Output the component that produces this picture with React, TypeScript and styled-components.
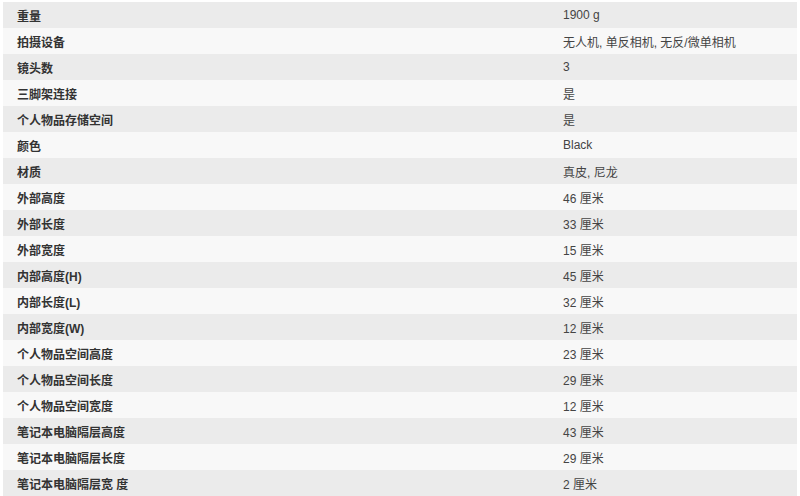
import React from "react";
import styled, { createGlobalStyle } from "styled-components";

const specs: [string, string][] = [
  ["重量", "1900 g"],
  ["拍摄设备", "无人机, 单反相机, 无反/微单相机"],
  ["镜头数", "3"],
  ["三脚架连接", "是"],
  ["个人物品存储空间", "是"],
  ["颜色", "Black"],
  ["材质", "真皮, 尼龙"],
  ["外部高度", "46 厘米"],
  ["外部长度", "33 厘米"],
  ["外部宽度", "15 厘米"],
  ["内部高度(H)", "45 厘米"],
  ["内部长度(L)", "32 厘米"],
  ["内部宽度(W)", "12 厘米"],
  ["个人物品空间高度", "23 厘米"],
  ["个人物品空间长度", "29 厘米"],
  ["个人物品空间宽度", "12 厘米"],
  ["笔记本电脑隔层高度", "43 厘米"],
  ["笔记本电脑隔层长度", "29 厘米"],
  ["笔记本电脑隔层宽 度", "2 厘米"],
];

const GlobalStyle = createGlobalStyle`
  html, body {
    margin: 0;
    padding: 0;
    background: #ffffff;
    font-family: "Liberation Sans", Arial, "Noto Sans CJK SC", sans-serif;
  }
`;

const Wrap = styled.div`
  padding: 2px 3px 0 3px;
`;

const Table = styled.div`
  display: flex;
  flex-direction: column;
`;

const Row = styled.div<{ $odd: boolean }>`
  display: grid;
  grid-template-columns: 546px 1fr;
  height: 26px;
  align-items: center;
  background: ${(p) => (p.$odd ? "#ebebeb" : "#f8f8f8")};
`;

const Label = styled.div`
  padding-left: 14px;
  font-size: 12px;
  font-weight: bold;
  color: #333333;
`;

const Value = styled.div`
  padding-left: 14px;
  font-size: 12px;
  color: #444444;
`;

export default function App() {
  return (
    <Wrap>
      <GlobalStyle />
      <Table>
        {specs.map(([label, value], i) => (
          <Row key={label} $odd={i % 2 === 0}>
            <Label>{label}</Label>
            <Value>{value}</Value>
          </Row>
        ))}
      </Table>
    </Wrap>
  );
}
